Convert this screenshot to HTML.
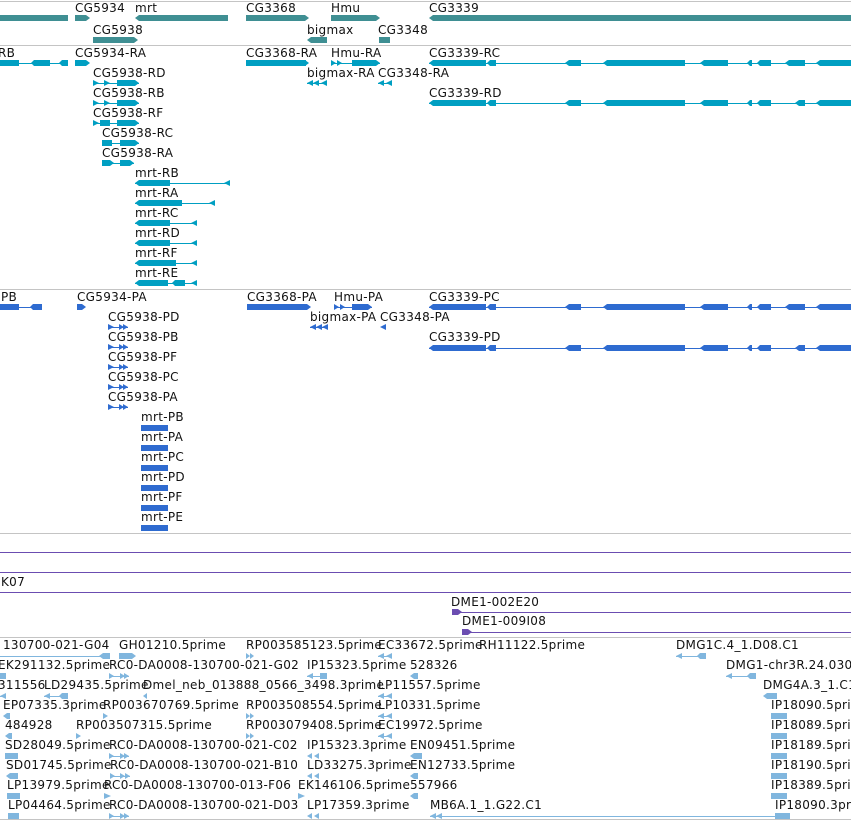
<!DOCTYPE html>
<html><head><meta charset="utf-8"><style>
html,body{margin:0;padding:0;background:#fff;}
body{width:851px;height:821px;position:relative;overflow:hidden;font-family:"DejaVu Sans","Liberation Sans",sans-serif;font-size:12px;letter-spacing:0.3px;color:#111;}
.t{position:absolute;line-height:14px;white-space:nowrap;}
svg{position:absolute;left:0;top:0;}
</style></head><body>
<svg width="851" height="821" xmlns="http://www.w3.org/2000/svg">
<!-- separators -->
<g fill="#c4c4c4">
<rect x="0" y="1" width="851" height="1"/><rect x="0" y="45" width="851" height="1"/>
<rect x="0" y="289" width="851" height="1"/><rect x="0" y="533" width="851" height="1"/>
<rect x="0" y="637" width="851" height="1"/><rect x="0" y="819" width="851" height="1"/>
</g>
<!-- gene track -->
<g fill="#3f8f93">
<rect x="0" y="15" width="68" height="6"/>
<polygon points="75,15 86,15 90,18 86,21 75,21"/>
<polygon points="139,15 228,15 228,21 139,21 135,18"/>
<polygon points="246,15 305,15 309,18 305,21 246,21"/>
<polygon points="331,15 376,15 380,18 376,21 331,21"/>
<polygon points="433,15 851,15 851,21 433,21 429,18"/>
<polygon points="93,37 134,37 138,40 134,43 93,43"/>
<polygon points="311,37 327,37 327,43 311,43 307,40"/>
<rect x="379" y="37" width="11" height="6"/>
</g>
<!-- transcripts cyan -->
<g fill="#009fc2" stroke="none">
<!-- row 63 -->
<rect x="0" y="63" width="68" height="1"/><rect x="0" y="60" width="19" height="6"/><polygon points="34,60 50,60 50,66 34,66 31,63"/><polygon points="62,60 68,60 68,66 62,66 59,63"/>
<polygon points="75,60 86,60 90,63 86,66 75,66"/>
<rect x="246" y="60" width="60" height="6"/><polygon points="305,60 309,63 305,66"/>
<rect x="331" y="63" width="49" height="1"/><polygon points="331,60 336,63 331,66"/><polygon points="337,60 342,63 337,66"/><rect x="352" y="60" width="24" height="6"/><polygon points="376,60 380,63 376,66"/>
<rect x="429" y="63" width="422" height="1"/>
<polygon points="433,60 486,60 486,66 433,66 429,63"/><polygon points="490,60 496,60 496,66 490,66 487,63"/><polygon points="569,60 581,60 581,66 569,66 565,63"/><polygon points="607,60 685,60 685,66 607,66 603,63"/><polygon points="704,60 728,60 728,66 704,66 700,63"/><polygon points="750,60 752,60 752,66 750,66 747,63"/><polygon points="760,60 771,60 771,66 760,66 757,63"/><polygon points="789,60 805,60 805,66 789,66 785,63"/><polygon points="820,60 851,60 851,66 820,66 816,63"/>
<!-- row 83 -->
<rect x="93" y="83" width="46" height="1"/><polygon points="93,80 99,83 93,86"/><polygon points="104,80 110,83 104,86"/><polygon points="117,80 135,80 139,83 135,86 117,86"/>
<rect x="307" y="83" width="20" height="1"/><polygon points="313,80 307,83 313,86"/><polygon points="319,80 313,83 319,86"/><polygon points="327,80 321,83 327,86"/>
<rect x="378" y="83" width="14" height="1"/><polygon points="384,80 378,83 384,86"/><polygon points="392,80 386,83 392,86"/>
<!-- CG3339-RD 103 -->
<rect x="429" y="103" width="422" height="1"/>
<polygon points="433,100 486,100 486,106 433,106 429,103"/><polygon points="490,100 496,100 496,106 490,106 487,103"/><polygon points="569,100 581,100 581,106 569,106 565,103"/><polygon points="607,100 685,100 685,106 607,106 603,103"/><polygon points="704,100 728,100 728,106 704,106 700,103"/><polygon points="750,100 752,100 752,106 750,106 747,103"/><polygon points="760,100 771,100 771,106 760,106 757,103"/><polygon points="799,100 805,100 805,106 799,106 795,103"/><polygon points="820,100 851,100 851,106 820,106 816,103"/>
<!-- CG5938 RB, RF -->
<rect x="93" y="103" width="46" height="1"/><polygon points="93,100 99,103 93,106"/><polygon points="104,100 110,103 104,106"/><polygon points="117,100 135,100 139,103 135,106 117,106"/>
<rect x="93" y="123" width="46" height="1"/><polygon points="93,120 99,123 93,126"/><rect x="100" y="120" width="10" height="6"/><polygon points="117,120 135,120 139,123 135,126 117,126"/>
<rect x="102" y="143" width="37" height="1"/><rect x="102" y="140" width="10" height="6"/><polygon points="120,140 135,140 139,143 135,146 120,146"/>
<rect x="102" y="163" width="32" height="1"/><polygon points="102,160 110,160 114,163 110,166 102,166"/><polygon points="120,160 130,160 134,163 130,166 120,166"/>
<!-- mrt -->
<rect x="135" y="183" width="95" height="1"/><polygon points="139,180 170,180 170,186 139,186 135,183"/><polygon points="230,180 224,183 230,186"/>
<rect x="135" y="203" width="80" height="1"/><polygon points="139,200 182,200 182,206 139,206 135,203"/><polygon points="215,200 209,203 215,206"/>
<rect x="135" y="223" width="62" height="1"/><polygon points="139,220 170,220 170,226 139,226 135,223"/><polygon points="197,220 191,223 197,226"/>
<rect x="135" y="243" width="62" height="1"/><polygon points="139,240 170,240 170,246 139,246 135,243"/><polygon points="197,240 191,243 197,246"/>
<rect x="135" y="263" width="62" height="1"/><polygon points="139,260 176,260 176,266 139,266 135,263"/><polygon points="197,260 191,263 197,266"/>
<rect x="135" y="283" width="62" height="1"/><polygon points="139,280 168,280 168,286 139,286 135,283"/><polygon points="175,280 185,280 185,286 175,286 172,283"/><polygon points="197,280 191,283 197,286"/>
</g>
<!-- blue track -->
<g fill="#2e6bd0">
<rect x="0" y="307" width="42" height="1"/><rect x="0" y="304" width="19" height="6"/><polygon points="33,304 42,304 42,310 33,310 30,307"/>
<polygon points="77,304 82,304 86,307 82,310 77,310"/>
<rect x="247" y="304" width="60" height="6"/><polygon points="305,304 307,304 311,307 307,310 305,310"/>
<rect x="334" y="307" width="38" height="1"/><polygon points="334,304 339,307 334,310"/><polygon points="340,304 345,307 340,310"/><rect x="352" y="304" width="16" height="6"/><polygon points="368,304 372,307 368,310"/>
<rect x="429" y="307" width="422" height="1"/>
<polygon points="433,304 486,304 486,310 433,310 429,307"/><polygon points="490,304 496,304 496,310 490,310 487,307"/><polygon points="569,304 581,304 581,310 569,310 565,307"/><polygon points="607,304 685,304 685,310 607,310 603,307"/><polygon points="704,304 728,304 728,310 704,310 700,307"/><polygon points="750,304 752,304 752,310 750,310 747,307"/><polygon points="760,304 771,304 771,310 760,310 757,307"/><polygon points="789,304 805,304 805,310 789,310 785,307"/><polygon points="820,304 851,304 851,310 820,310 816,307"/>
<rect x="310" y="327" width="18" height="1"/><polygon points="316,324 310,327 316,330"/><polygon points="322,324 316,327 322,330"/><polygon points="328,324 322,327 328,330"/>
<polygon points="386,324 380,327 386,330"/>
<rect x="429" y="348" width="422" height="1"/>
<polygon points="433,345 486,345 486,351 433,351 429,348"/><polygon points="490,345 496,345 496,351 490,351 487,348"/><polygon points="569,345 581,345 581,351 569,351 565,348"/><polygon points="607,345 685,345 685,351 607,351 603,348"/><polygon points="704,345 728,345 728,351 704,351 700,348"/><polygon points="750,345 752,345 752,351 750,351 747,348"/><polygon points="760,345 771,345 771,351 760,351 757,348"/><polygon points="799,345 805,345 805,351 799,351 795,348"/><polygon points="820,345 851,345 851,351 820,351 816,348"/>
<g id="b5">
<rect x="108" y="327" width="20" height="1"/><polygon points="108,324 114,327 108,330"/><polygon points="119,324 124,327 119,330"/><polygon points="123,324 128,327 123,330"/>
</g>
<use href="#b5" y="20"/><use href="#b5" y="40"/><use href="#b5" y="60"/><use href="#b5" y="80"/>
<rect x="141" y="425" width="27" height="6"/><rect x="141" y="445" width="27" height="6"/><rect x="141" y="465" width="27" height="6"/><rect x="141" y="485" width="27" height="6"/><rect x="141" y="505" width="27" height="6"/><rect x="141" y="525" width="27" height="6"/>
</g>
<!-- purple -->
<g fill="#6b4db1">
<rect x="0" y="552" width="851" height="1"/><rect x="0" y="572" width="851" height="1"/><rect x="0" y="592" width="851" height="1"/>
<rect x="452" y="612" width="399" height="1"/><polygon points="452,609 458,609 462,612 458,615 452,615"/>
<rect x="462" y="632" width="389" height="1"/><polygon points="462,629 468,629 472,632 468,635 462,635"/>
</g>
<!-- ESTs -->
<g fill="#80b6de">
<rect x="0" y="656" width="110" height="1"/><polygon points="103,653 110,653 110,659 103,659 99,656"/>
<polygon points="119,653 132,653 136,656 132,659 119,659"/>
<polygon points="246,653 250,656 246,659"/><polygon points="250,653 254,656 250,659"/>
<polygon points="384,653 378,656 384,659"/><polygon points="392,653 386,656 392,659"/><rect x="378" y="656" width="14" height="1"/>
<rect x="676" y="656" width="30" height="1"/><polygon points="682,653 676,656 682,659"/><polygon points="700,653 706,653 706,659 700,659 697,656"/>
<rect x="0" y="673" width="6" height="6"/>
<rect x="109" y="676" width="20" height="1"/><polygon points="109,673 114,676 109,679"/><polygon points="120,673 125,676 120,679"/><polygon points="124,673 129,676 124,679"/>
<rect x="307" y="676" width="20" height="1"/><polygon points="313,673 307,676 313,679"/><polygon points="320,673 327,673 327,679 320,679"/>
<polygon points="414,673 418,673 418,679 414,679 410,676"/>
<rect x="726" y="676" width="30" height="1"/><polygon points="732,673 726,676 732,679"/><polygon points="750,673 756,673 756,679 750,679 747,676"/>
<rect x="0" y="696" width="6" height="1"/><polygon points="6,693 0,696 6,699"/>
<rect x="44" y="696" width="24" height="1"/><polygon points="50,693 44,696 50,699"/><polygon points="62,693 68,693 68,699 62,699 59,696"/>
<polygon points="147,693 143,696 147,699"/>
<rect x="378" y="696" width="14" height="1"/><polygon points="384,693 378,696 384,699"/><polygon points="392,693 386,696 392,699"/>
<polygon points="767,693 777,693 777,699 767,699 763,696"/>
<polygon points="7,713 10,713 10,719 7,719 3,716"/>
<polygon points="103,713 108,716 103,719"/>
<polygon points="246,713 250,716 246,719"/><polygon points="250,713 254,716 250,719"/>
<rect x="378" y="716" width="14" height="1"/><polygon points="384,713 378,716 384,719"/><polygon points="392,713 386,716 392,719"/>
<rect x="771" y="713" width="16" height="6"/>
<polygon points="9,733 12,733 12,739 9,739 5,736"/>
<polygon points="76,733 81,736 76,739"/>
<polygon points="246,733 250,736 246,739"/><polygon points="250,733 254,736 250,739"/>
<rect x="378" y="736" width="14" height="1"/><polygon points="384,733 378,736 384,739"/><polygon points="392,733 386,736 392,739"/>
<rect x="771" y="733" width="16" height="6"/>
<rect x="5" y="753" width="13" height="6"/>
<rect x="109" y="756" width="20" height="1"/><polygon points="109,753 114,756 109,759"/><polygon points="120,753 125,756 120,759"/><polygon points="124,753 129,756 124,759"/>
<polygon points="312,753 307,756 312,759"/><polygon points="319,753 314,756 319,759"/>
<polygon points="414,753 422,753 422,759 414,759 410,756"/>
<rect x="771" y="753" width="16" height="6"/>
<polygon points="10,773 18,773 18,779 10,779 6,776"/>
<rect x="110" y="776" width="20" height="1"/><polygon points="110,773 115,776 110,779"/><polygon points="120,773 125,776 120,779"/><polygon points="125,773 130,776 125,779"/>
<polygon points="312,773 307,776 312,779"/><polygon points="319,773 314,776 319,779"/>
<polygon points="414,773 418,773 418,779 414,779 410,776"/>
<rect x="771" y="773" width="16" height="6"/>
<rect x="7" y="793" width="13" height="6"/>
<polygon points="104,793 111,796 104,799"/>
<polygon points="298,793 305,796 298,799"/>
<polygon points="414,793 418,793 418,799 414,799 410,796"/>
<rect x="771" y="793" width="16" height="6"/>
<rect x="8" y="813" width="11" height="6"/>
<rect x="109" y="816" width="20" height="1"/><polygon points="109,813 114,816 109,819"/><polygon points="120,813 125,816 120,819"/><polygon points="124,813 129,816 124,819"/>
<polygon points="312,813 307,816 312,819"/><polygon points="319,813 314,816 319,819"/>
<rect x="430" y="816" width="360" height="1"/><polygon points="436,813 430,816 436,819"/><polygon points="442,813 436,816 442,819"/><rect x="775" y="813" width="15" height="6"/>
</g>
</svg>

<!-- gene labels -->
<div class="t" style="left:75px;top:1px">CG5934</div><div class="t" style="left:135px;top:1px">mrt</div>
<div class="t" style="left:246px;top:1px">CG3368</div><div class="t" style="left:331px;top:1px">Hmu</div>
<div class="t" style="left:429px;top:1px">CG3339</div>
<div class="t" style="left:93px;top:23px">CG5938</div><div class="t" style="left:307px;top:23px">bigmax</div><div class="t" style="left:378px;top:23px">CG3348</div>

<!-- transcript labels -->
<div class="t" style="left:-2px;top:46px">RB</div><div class="t" style="left:75px;top:46px">CG5934-RA</div>
<div class="t" style="left:246px;top:46px">CG3368-RA</div><div class="t" style="left:331px;top:46px">Hmu-RA</div><div class="t" style="left:429px;top:46px">CG3339-RC</div>
<div class="t" style="left:93px;top:66px">CG5938-RD</div><div class="t" style="left:307px;top:66px">bigmax-RA</div><div class="t" style="left:378px;top:66px">CG3348-RA</div>
<div class="t" style="left:93px;top:86px">CG5938-RB</div><div class="t" style="left:429px;top:86px">CG3339-RD</div>
<div class="t" style="left:93px;top:106px">CG5938-RF</div>
<div class="t" style="left:102px;top:126px">CG5938-RC</div>
<div class="t" style="left:102px;top:146px">CG5938-RA</div>
<div class="t" style="left:135px;top:166px">mrt-RB</div>
<div class="t" style="left:135px;top:186px">mrt-RA</div>
<div class="t" style="left:135px;top:206px">mrt-RC</div>
<div class="t" style="left:135px;top:226px">mrt-RD</div>
<div class="t" style="left:135px;top:246px">mrt-RF</div>
<div class="t" style="left:135px;top:266px">mrt-RE</div>

<!-- blue labels -->
<div class="t" style="left:1px;top:290px">PB</div><div class="t" style="left:77px;top:290px">CG5934-PA</div>
<div class="t" style="left:247px;top:290px">CG3368-PA</div><div class="t" style="left:334px;top:290px">Hmu-PA</div><div class="t" style="left:429px;top:290px">CG3339-PC</div>
<div class="t" style="left:108px;top:310px">CG5938-PD</div><div class="t" style="left:310px;top:310px">bigmax-PA</div><div class="t" style="left:380px;top:310px">CG3348-PA</div>
<div class="t" style="left:108px;top:330px">CG5938-PB</div><div class="t" style="left:429px;top:330px">CG3339-PD</div>
<div class="t" style="left:108px;top:350px">CG5938-PF</div>
<div class="t" style="left:108px;top:370px">CG5938-PC</div>
<div class="t" style="left:108px;top:390px">CG5938-PA</div>
<div class="t" style="left:141px;top:410px">mrt-PB</div>
<div class="t" style="left:141px;top:430px">mrt-PA</div>
<div class="t" style="left:141px;top:450px">mrt-PC</div>
<div class="t" style="left:141px;top:470px">mrt-PD</div>
<div class="t" style="left:141px;top:490px">mrt-PF</div>
<div class="t" style="left:141px;top:510px">mrt-PE</div>

<div class="t" style="left:1px;top:575px">K07</div>
<div class="t" style="left:451px;top:595px">DME1-002E20</div>
<div class="t" style="left:462px;top:614px">DME1-009I08</div>

<!-- EST labels -->
<div class="t" style="left:3px;top:638px">130700-021-G04</div><div class="t" style="left:119px;top:638px">GH01210.5prime</div><div class="t" style="left:246px;top:638px">RP003585123.5prime</div><div class="t" style="left:378px;top:638px">EC33672.5prime</div><div class="t" style="left:479px;top:638px">RH11122.5prime</div><div class="t" style="left:676px;top:638px">DMG1C.4_1.D08.C1</div>
<div class="t" style="left:-2px;top:658px">EK291132.5prime</div><div class="t" style="left:109px;top:658px">RC0-DA0008-130700-021-G02</div><div class="t" style="left:307px;top:658px">IP15323.5prime</div><div class="t" style="left:410px;top:658px">528326</div><div class="t" style="left:726px;top:658px">DMG1-chr3R.24.030</div>
<div class="t" style="left:-2px;top:678px">311556</div><div class="t" style="left:44px;top:678px">LD29435.5prime</div><div class="t" style="left:143px;top:678px">Dmel_neb_013888_0566_3498.3prime</div><div class="t" style="left:378px;top:678px">LP11557.5prime</div><div class="t" style="left:763px;top:678px">DMG4A.3_1.C1</div>
<div class="t" style="left:3px;top:698px">EP07335.3prime</div><div class="t" style="left:103px;top:698px">RP003670769.5prime</div><div class="t" style="left:246px;top:698px">RP003508554.5prime</div><div class="t" style="left:378px;top:698px">LP10331.5prime</div><div class="t" style="left:771px;top:698px">IP18090.5prime</div>
<div class="t" style="left:5px;top:718px">484928</div><div class="t" style="left:76px;top:718px">RP003507315.5prime</div><div class="t" style="left:246px;top:718px">RP003079408.5prime</div><div class="t" style="left:378px;top:718px">EC19972.5prime</div><div class="t" style="left:771px;top:718px">IP18089.5prime</div>
<div class="t" style="left:5px;top:738px">SD28049.5prime</div><div class="t" style="left:109px;top:738px">RC0-DA0008-130700-021-C02</div><div class="t" style="left:307px;top:738px">IP15323.3prime</div><div class="t" style="left:410px;top:738px">EN09451.5prime</div><div class="t" style="left:771px;top:738px">IP18189.5prime</div>
<div class="t" style="left:6px;top:758px">SD01745.5prime</div><div class="t" style="left:110px;top:758px">RC0-DA0008-130700-021-B10</div><div class="t" style="left:307px;top:758px">LD33275.3prime</div><div class="t" style="left:410px;top:758px">EN12733.5prime</div><div class="t" style="left:771px;top:758px">IP18190.5prime</div>
<div class="t" style="left:7px;top:778px">LP13979.5prime</div><div class="t" style="left:104px;top:778px">RC0-DA0008-130700-013-F06</div><div class="t" style="left:298px;top:778px">EK146106.5prime</div><div class="t" style="left:410px;top:778px">557966</div><div class="t" style="left:771px;top:778px">IP18389.5prime</div>
<div class="t" style="left:8px;top:798px">LP04464.5prime</div><div class="t" style="left:109px;top:798px">RC0-DA0008-130700-021-D03</div><div class="t" style="left:307px;top:798px">LP17359.3prime</div><div class="t" style="left:430px;top:798px">MB6A.1_1.G22.C1</div><div class="t" style="left:775px;top:798px">IP18090.3prime</div>
</body></html>
